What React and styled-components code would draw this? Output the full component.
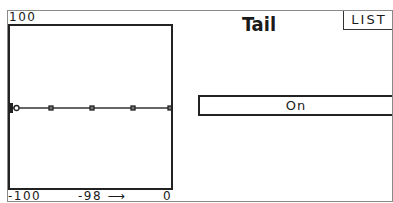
import React from "react";
import styled, { createGlobalStyle } from "styled-components";

const GlobalStyle = createGlobalStyle`
  html, body {
    margin: 0;
    padding: 0;
    background: #ffffff;
  }
  body {
    font-family: "DejaVu Sans", "Liberation Sans", sans-serif;
    color: #1a1a1a;
  }
`;

const Screen = styled.div`
  width: 393px;
  height: 203px;
  padding: 10px 0 0 7px;
  box-sizing: border-box;
  overflow: hidden;
`;

const Frame = styled.div`
  display: flex;
  width: 386px;
  height: 192px;
  border: 1px solid #8a8a8a;
  box-sizing: border-box;
`;

const GraphColumn = styled.div`
  display: flex;
  flex-direction: column;
  width: 165px;
`;

const TopLabel = styled.div`
  height: 13px;
  font-size: 12px;
  line-height: 13px;
  letter-spacing: 1.5px;
  padding-left: 1px;
`;

const GraphBox = styled.div`
  width: 165px;
  height: 166px;
  border: 2px solid #222;
  box-sizing: border-box;
`;

const AxisRow = styled.div`
  display: flex;
  align-items: center;
  height: 12px;
  font-size: 12px;
  line-height: 12px;
  letter-spacing: 1.5px;
`;

const AxisText = styled.span`
  width: ${(p) => p.$w}px;
  text-align: ${(p) => p.$align || "left"};
  white-space: nowrap;
`;

const RightColumn = styled.div`
  flex: 1;
  display: flex;
  flex-direction: column;
`;

const TitleRow = styled.div`
  display: flex;
  height: 19px;
`;

const Title = styled.div`
  flex: 1;
  text-align: center;
  font-family: "DejaVu Sans Condensed", "DejaVu Sans", sans-serif;
  font-weight: bold;
  font-size: 20px;
  line-height: 22px;
  padding-top: 2px;
  padding-left: 2px;
`;

const ListTab = styled.div`
  width: 49px;
  height: 19px;
  border-left: 1px solid #333;
  border-bottom: 1px solid #333;
  box-sizing: border-box;
  font-size: 13px;
  line-height: 17px;
  text-align: center;
  letter-spacing: 2px;
  padding-left: 2px;
`;

const ValueButton = styled.div`
  margin: 65px 0 0 25px;
  height: 21px;
  border: 2px solid #222;
  border-right: none;
  box-sizing: border-box;
  font-size: 13px;
  line-height: 17px;
  text-align: center;
  letter-spacing: 1px;
`;

const markers = [41, 82, 123, 160];

const Curve = () => (
  <svg width="161" height="162" viewBox="0 0 161 162" style={{ display: "block" }}>
    <line x1="0" y1="82" x2="161" y2="82" stroke="#333" strokeWidth="1.5" />
    <rect x="0" y="77" width="3" height="10" fill="#222" />
    <circle cx="6.5" cy="82" r="2.5" fill="#fff" stroke="#222" strokeWidth="1.3" />
    {markers.map((x, i) => (
      <rect
        key={i}
        x={x - 2}
        y="80"
        width="4"
        height="4"
        fill="#777"
        stroke="#222"
        strokeWidth="1.3"
      />
    ))}
  </svg>
);

const App = () => (
  <>
    <GlobalStyle />
    <Screen>
      <Frame>
        <GraphColumn>
          <TopLabel>100</TopLabel>
          <GraphBox>
            <Curve />
          </GraphBox>
          <AxisRow>
            <AxisText $w={70}>-100</AxisText>
            <AxisText $w={85}>-98 ⟶</AxisText>
            <AxisText $w={10}>0</AxisText>
          </AxisRow>
        </GraphColumn>
        <RightColumn>
          <TitleRow>
            <Title>Tail</Title>
            <ListTab>LIST</ListTab>
          </TitleRow>
          <ValueButton>On</ValueButton>
        </RightColumn>
      </Frame>
    </Screen>
  </>
);

export default App;
